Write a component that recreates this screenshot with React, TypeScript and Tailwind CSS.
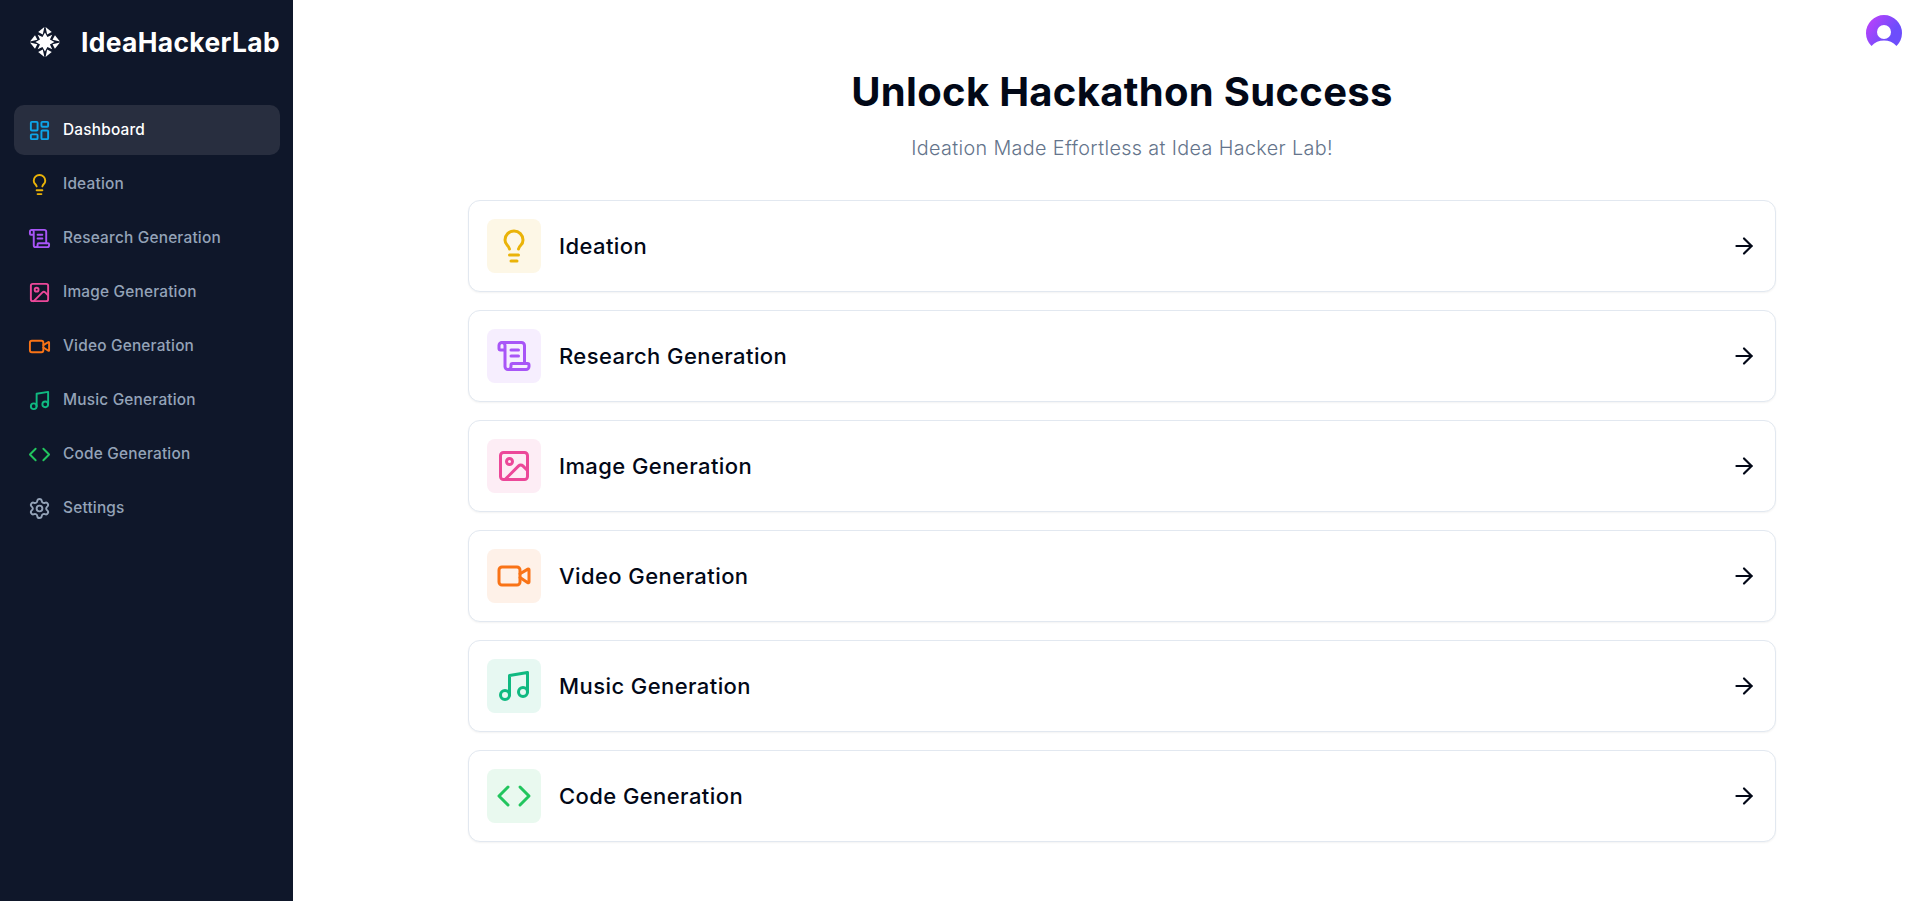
import { ArrowRight, Code, Image, LayoutDashboard, Lightbulb, Music, ScrollText, Settings, Video } from "lucide-react";

const tools = [
  { label: "Ideation", icon: Lightbulb, color: "text-[#eab308]", tint: "bg-[#fdf7e6]" },
  { label: "Research Generation", icon: ScrollText, color: "text-[#a855f7]", tint: "bg-[#f6eefe]" },
  { label: "Image Generation", icon: Image, color: "text-[#ec4899]", tint: "bg-[#fdedf5]" },
  { label: "Video Generation", icon: Video, color: "text-[#f97316]", tint: "bg-[#fef1e8]" },
  { label: "Music Generation", icon: Music, color: "text-[#10b981]", tint: "bg-[#e7f8f2]" },
  { label: "Code Generation", icon: Code, color: "text-[#22c55e]", tint: "bg-[#e9f9ef]" },
];

const Logo = () => (
  <svg width="30" height="30" viewBox="0 0 30 30" className="text-white">
    <path fill="currentColor" d="M15 5.500l2.500 4.500 4.800-2.300-2.300 4.800 4.500 2.500-4.500 2.500 2.300 4.800-4.800-2.300-2.500 4.500-2.500-4.500-4.800 2.300 2.300-4.800L5.500 15l4.500-2.500-2.300-4.800 4.800 2.300z" />
    {[0, 90, 180, 270].map((angle) => (
      <g key={angle} transform={`rotate(${angle} 15 15)`}>
        <path fill="currentColor" d="M15.600 0l1.600 7.400 4.600-2.400z" />
        <path fill="currentColor" d="M14.400 0l-1.600 7.400-4.600-2.400z" />
      </g>
    ))}
  </svg>
);

const Avatar = () => (
  <svg width="36" height="32" viewBox="0 0 36 32">
    <defs>
      <linearGradient id="avatarGrad" x1="0" y1="0" x2="1" y2="0.6">
        <stop offset="0.2" stopColor="#b043fb" />
        <stop offset="0.8" stopColor="#6d4dfc" />
      </linearGradient>
    </defs>
    <path fill="url(#avatarGrad)" d="M5.500 31A18 18 0 1 1 30.500 31C27 27 23 25.400 18 25.400S9 27 5.500 31z" />
    <circle cx="18" cy="17" r="7" fill="#fff" />
  </svg>
);

export default function App() {
  return (
    <div className="flex min-h-[901px] bg-white font-['Inter',sans-serif] text-[#020817]">
      <aside className="w-[293px] shrink-0 bg-[#0f172a] pl-[14px] pr-[13px]">
        <div className="flex items-center gap-[21px] pl-[16px] pt-[27px] pb-[48px]">
          <Logo />
          <span className="text-[26.4px] leading-[30px] font-bold tracking-[0.36px] text-white whitespace-nowrap">IdeaHackerLab</span>
        </div>
        <nav className="flex flex-col gap-[4px]">
          <a className="flex h-[50px] items-center gap-[12px] rounded-[10px] bg-[#282e3f] pl-[14px] pr-[13px] text-[15.4px] font-medium tracking-[0.2px] text-white">
            <LayoutDashboard size={23} className="text-[#0ea5e9]" />
            Dashboard
          </a>
          {tools.map((tool) => (
            <a key={tool.label} className="flex h-[50px] items-center gap-[12px] pl-[14px] pr-[13px] text-[15.4px] font-medium tracking-[0.2px] text-[#94a3b8]">
              <tool.icon size={23} className={tool.color} />
              {tool.label}
            </a>
          ))}
          <a className="flex h-[50px] items-center gap-[12px] pl-[14px] pr-[13px] text-[15.4px] font-medium tracking-[0.2px] text-[#94a3b8]">
            <Settings size={23} className="text-[#94a3b8]" />
            Settings
          </a>
        </nav>
      </aside>

      <main className="relative flex-1">
        <button className="absolute right-[18px] top-[15px]">
          <Avatar />
        </button>
        <div className="ml-[175px] w-[1308px] pt-[64px]">
          <h1 className="text-center text-[40px] leading-[56px] font-bold tracking-[0.3px]">Unlock Hackathon Success</h1>
          <p className="mt-[14px] text-center text-[19.8px] leading-[28px] font-light tracking-[0.36px] text-[#64748b]">
            Ideation Made Effortless at Idea Hacker Lab!
          </p>
          <div className="mt-[38px] flex flex-col gap-[18px]">
            {tools.map((tool) => (
              <div
                key={tool.label}
                className="flex h-[92px] items-center justify-between rounded-[12px] border border-[#e2e8f0] bg-white px-[18px] shadow-[0_1px_2px_rgba(0,0,0,0.05)]"
              >
                <div className="flex items-center gap-[18px]">
                  <div className={`flex h-[54px] w-[54px] items-center justify-center rounded-[8px] ${tool.tint}`}>
                    <tool.icon size={36} className={tool.color} />
                  </div>
                  <span className="text-[22px] font-medium tracking-[0.42px]">{tool.label}</span>
                </div>
                <ArrowRight size={26} />
              </div>
            ))}
          </div>
        </div>
      </main>
    </div>
  );
}
